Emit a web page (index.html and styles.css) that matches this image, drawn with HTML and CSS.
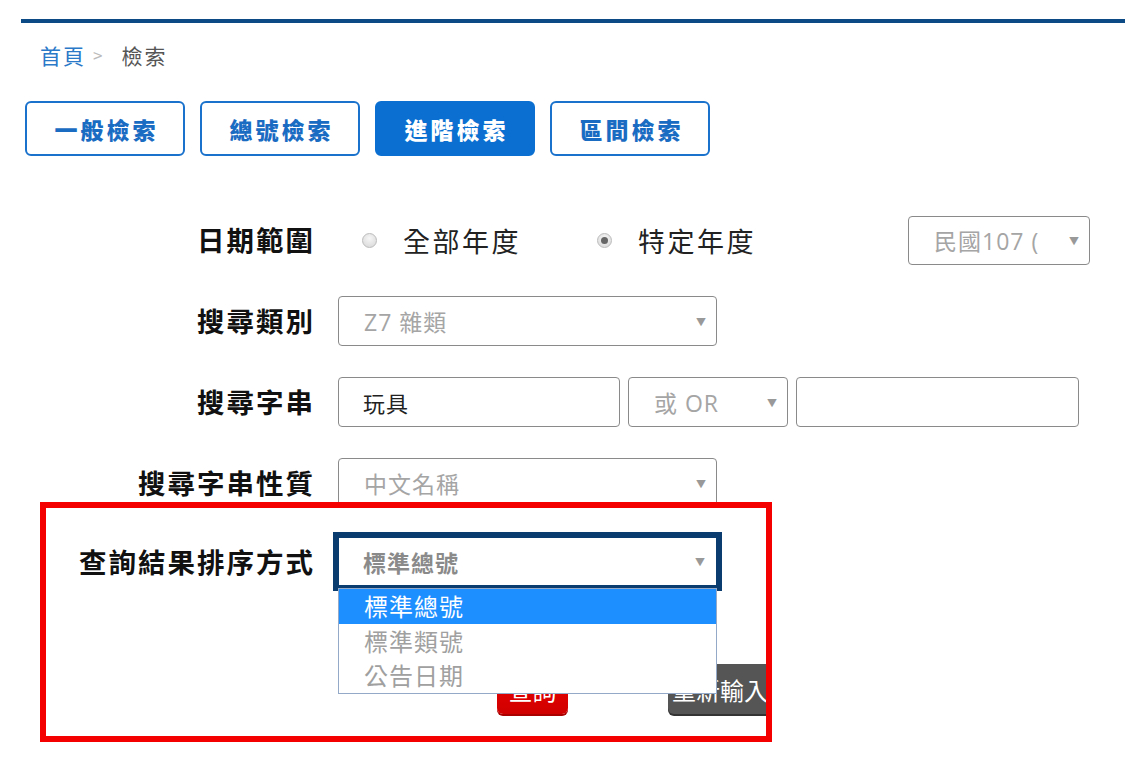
FILE: index.html
```html
<!DOCTYPE html>
<html lang="zh-Hant">
<head>
<meta charset="utf-8">
<title>檢索</title>
<link rel="stylesheet" href="styles.css">
</head>
<body>
<div class="page">
  <div class="topbar"></div>
  <div class="crumb"><a class="home">首頁</a><span class="sep">&gt;</span><span class="cur">檢索</span></div>
  <div class="tabs">
    <div class="tab">一般檢索</div>
    <div class="tab">總號檢索</div>
    <div class="tab active">進階檢索</div>
    <div class="tab">區間檢索</div>
  </div>
  <div class="form">
    <div class="label">日期範圍</div>
    <div class="ctl row-date">
      <span class="radio"></span><span class="rtext">全部年度</span>
      <span class="radio checked"></span><span class="rtext">特定年度</span>
      <div class="select year"><span class="val">民國107 (</span><span class="arrow">▼</span></div>
    </div>

    <div class="label">搜尋類別</div>
    <div class="ctl">
      <div class="select wide"><span class="val">Z7 雜類</span><span class="arrow">▼</span></div>
    </div>

    <div class="label">搜尋字串</div>
    <div class="ctl row-str">
      <div class="input first"><span class="ival">玩具</span></div>
      <div class="select op"><span class="val">或 OR</span><span class="arrow">▼</span></div>
      <div class="input second"></div>
    </div>

    <div class="label">搜尋字串性質</div>
    <div class="ctl">
      <div class="select wide"><span class="val">中文名稱</span><span class="arrow">▼</span></div>
    </div>

    <div class="label sortlabel">查詢結果排序方式</div>
    <div class="ctl sortctl">
      <div class="focusring">
        <div class="select sq"><span class="val dark">標準總號</span><span class="arrow">▼</span></div>
      </div>
      <div class="dropdown">
        <div class="opt hi">標準總號</div>
        <div class="opt">標準類號</div>
        <div class="opt">公告日期</div>
      </div>
    </div>

    <div class="label"></div>
    <div class="ctl buttons">
      <div class="btn red">查詢</div>
      <div class="btn gray">重新輸入</div>
    </div>
  </div>
</div>
<div class="annot"></div>
</body>
</html>
```

FILE: styles.css
```css
html, body {
  margin: 0;
  padding: 0;
  background: #fff;
}
body {
  position: relative;
  width: 1136px;
  height: 759px;
  overflow: hidden;
  font-family: "Open Sans", "Noto Sans CJK TC", sans-serif;
}
.page {
  margin-left: 21px;
  padding-top: 19px;
  width: 1104px;
}
.topbar {
  height: 4px;
  background: #0b4a84;
}
.crumb {
  margin-top: 18px;
  margin-left: 19px;
  font-family: "Noto Sans CJK TC", sans-serif;
  font-size: 21px;
  letter-spacing: 2px;
  line-height: 28px;
  color: #666;
  display: flex;
  align-items: center;
}
.home { color: #2a78c8; }
.sep { color: #bbb; font-size: 17px; letter-spacing: 0; margin: 0 19px 0 7px; }
.cur { color: #555; }

.tabs {
  display: flex;
  gap: 15px;
  margin-top: 32px;
  margin-left: 4px;
}
.tab {
  box-sizing: border-box;
  width: 160px;
  height: 55px;
  border: 2px solid #1a72cc;
  border-radius: 6px;
  color: #1a6cc3;
  font-family: "Noto Sans CJK TC", sans-serif;
  font-weight: 900;
  font-size: 23px;
  letter-spacing: 3px;
  padding-left: 3px;
  display: flex;
  align-items: center;
  justify-content: center;
}
.tab.active {
  background: #0a6fd0;
  border-color: #0a6fd0;
  color: #fff;
}

.form {
  display: grid;
  grid-template-columns: 292px 1fr;
  column-gap: 25px;
  row-gap: 31px;
  margin-top: 59px;
}
.label {
  font-family: "Noto Sans CJK TC", sans-serif;
  font-weight: 700;
  font-size: 27.5px;
  color: #111;
  text-align: right;
  line-height: 48px;
  letter-spacing: 2px;
  margin-right: -2px;
}
.ctl {
  display: flex;
  align-items: center;
  height: 50px;
}
.select, .input {
  box-sizing: border-box;
  height: 50px;
  border: 1px solid #8a8a8a;
  border-radius: 4px;
  background: #fff;
  display: flex;
  align-items: center;
  font-family: "Open Sans", "Noto Sans CJK TC", sans-serif;
  font-size: 23px;
  letter-spacing: 1px;
  color: #a5a5a5;
}
.val { padding-left: 25px; flex: 1; white-space: nowrap; overflow: hidden; }
.val.dark { color: #8a8a8a; font-weight: 700; font-family: "Noto Sans CJK TC", sans-serif; font-size: 23px; }
.arrow {
  font-size: 10px;
  color: #999;
  margin-right: 10px;
  margin-left: 6px;
  letter-spacing: 0;
}
.wide { width: 379px; }
.year { width: 182px; height: 49px; margin-left: auto; margin-right: 35px; }
.op { width: 160px; margin-left: 8px; }
.first { width: 282px; }
.second { width: 283px; margin-left: 8px; }
.ival { padding-left: 24px; color: #222; font-family: "Noto Sans CJK TC", sans-serif; font-size: 22px; }

.row-date { font-family: "Noto Sans CJK TC", sans-serif; font-size: 27px; color: #222; }
.radio {
  box-sizing: border-box;
  width: 15px;
  height: 15px;
  border-radius: 50%;
  border: 1px solid #bcbcbc;
  background: radial-gradient(circle at 50% 35%, #f6f6f6, #d6d6d6);
  margin-left: 24px;
  position: relative;
}
.radio.checked::after {
  content: "";
  position: absolute;
  left: 3px;
  top: 3px;
  width: 7px;
  height: 7px;
  border-radius: 50%;
  background: #666;
}
.rtext { margin-left: 26px; letter-spacing: 2.5px; }
.rtext + .radio { margin-left: 76px; }

.sortlabel { margin-top: -2px; }
.sortctl {
  position: relative;
  margin-left: -5px;
  margin-top: -7px;
  height: 59px;
  align-items: flex-start;
}
.focusring {
  box-sizing: border-box;
  width: 389px;
  height: 59px;
  border: 6px solid #0b3c70;
}
.select.sq {
  width: 377px;
  height: 47px;
  border-radius: 0;
  border: 1px solid #fff;
}
.select.sq .val { padding-left: 23px; }
.dropdown {
  position: absolute;
  left: 5px;
  top: 56px;
  box-sizing: border-box;
  width: 379px;
  background: #fff;
  border: 1px solid #94a8c8;
  z-index: 5;
}
.opt {
  height: 34.5px;
  line-height: 34px;
  padding-left: 25px;
  font-family: "Noto Sans CJK TC", sans-serif;
  font-size: 24px;
  letter-spacing: 1px;
  color: #a0a0a0;
}
.opt.hi { background: #1e8fff; color: #fff; }

.buttons {
  margin-top: 42px;
}
.btn {
  box-sizing: border-box;
  height: 50px;
  border-radius: 6px;
  color: #fff;
  font-family: "Noto Sans CJK TC", sans-serif;
  font-size: 24px;
  display: flex;
  align-items: center;
  white-space: nowrap;
  overflow: hidden;
}
.btn.red {
  width: 71px;
  margin-left: 159px;
  justify-content: center;
  background: linear-gradient(#f20000, #d00000);
  box-shadow: 0 2px 0 #a00;
}
.btn.gray {
  width: 104px;
  margin-left: 100px;
  padding-left: 4px;
  background: #555;
  border-radius: 6px 0 0 6px;
  box-shadow: 0 2px 0 #333;
}

.annot {
  position: absolute;
  left: 40px;
  top: 502px;
  width: 732px;
  height: 240px;
  box-sizing: border-box;
  border: 6px solid #f50000;
  z-index: 10;
  pointer-events: none;
}
```
